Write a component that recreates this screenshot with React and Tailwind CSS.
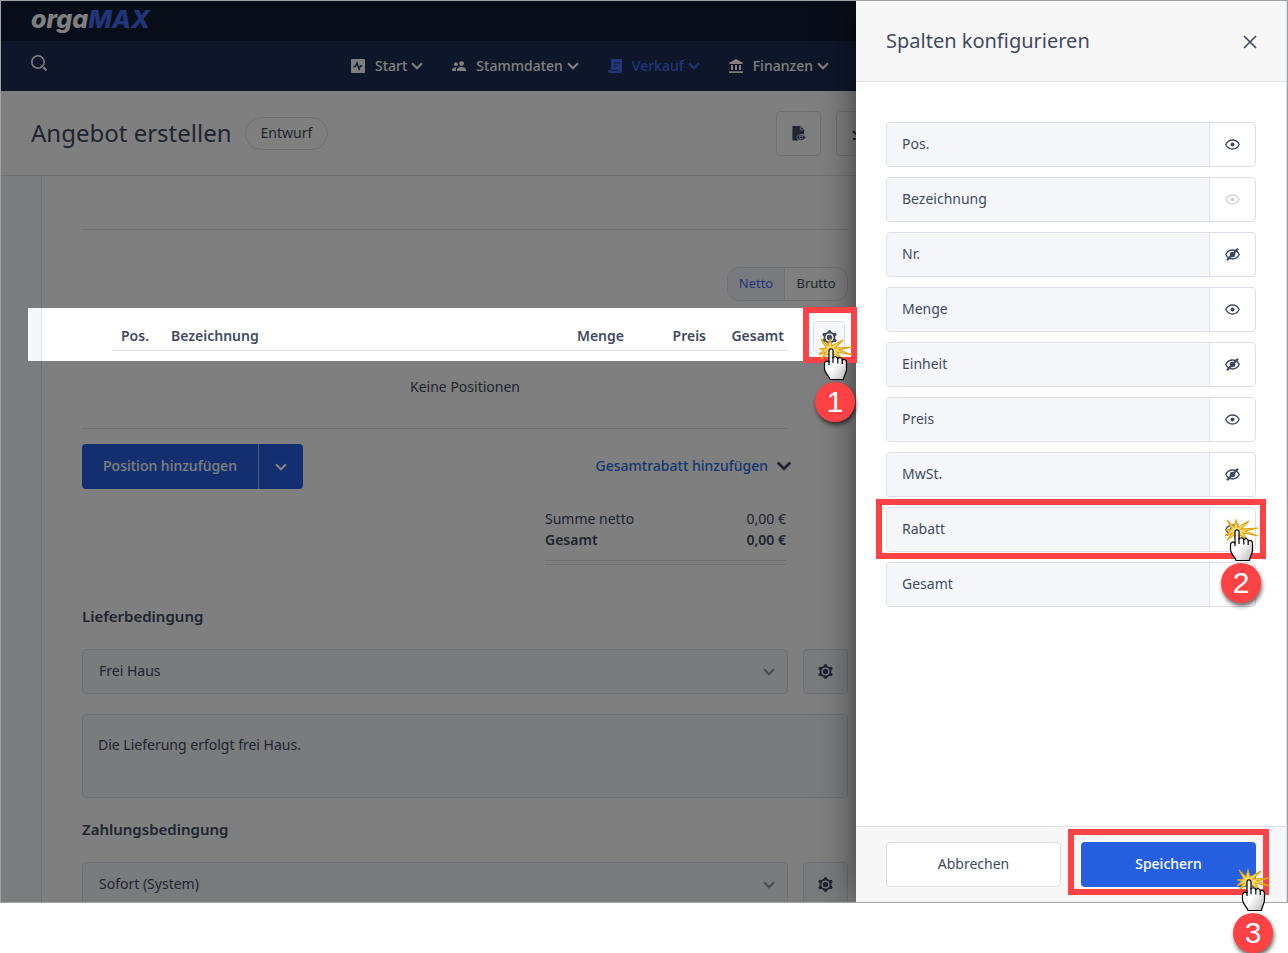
import React, { useState } from 'react';

const initialColumns = [
  { name: 'Pos.', visible: true },
  { name: 'Bezeichnung', visible: true, locked: true },
  { name: 'Nr.', visible: false },
  { name: 'Menge', visible: true },
  { name: 'Einheit', visible: false },
  { name: 'Preis', visible: true },
  { name: 'MwSt.', visible: false },
  { name: 'Rabatt', visible: false, step: 2 },
  { name: 'Gesamt', visible: true },
];

const ChevronIcon = ({ className }) => (
  <svg className={className} viewBox="0 0 12 8" fill="none" stroke="currentColor" strokeWidth="2.2" aria-hidden="true">
    <path d="M1 1.2 6 6.2 11 1.2" />
  </svg>
);

const SearchIcon = () => (
  <svg className="w-4 h-4" viewBox="0 0 16 16" fill="none" stroke="currentColor" strokeWidth="1.5" aria-hidden="true">
    <circle cx="7" cy="7" r="6.2" />
    <path d="M12.3 12.3 15.5 15.5" strokeWidth="2" />
  </svg>
);

const PulseIcon = () => (
  <svg className="w-3.5 h-3.5" viewBox="0 0 14 14" aria-hidden="true">
    <rect width="14" height="14" rx="1" fill="currentColor" />
    <path d="M2.5 7.5h2L6 4l2 6 1.4-3h2" fill="none" stroke="#1c2e54" strokeWidth="1.4" />
  </svg>
);

const PeopleIcon = () => (
  <svg className="w-3.5 h-3.5" viewBox="0 0 14 14" fill="currentColor" aria-hidden="true">
    <circle cx="9.6" cy="4.6" r="2.4" />
    <circle cx="3.9" cy="5.2" r="1.9" />
    <path d="M5 12V10.6c0-1.8 3-2.600 4.600-2.600S14 8.800 14 10.600V12zM0 12v-1.200C0 9.300 2 8.400 4.900 8.300 4.200 9 3.900 9.700 3.900 10.600V12z" />
  </svg>
);

const ReceiptIcon = () => (
  <svg className="w-3.5 h-3.5" viewBox="0 0 14 14" aria-hidden="true">
    <path d="M3 0h11v12c0 1.200-.8 2-2 2H2c-1.200 0-2-.8-2-2v-1h3z" fill="currentColor" />
    <path d="M5.500 4h6M5.500 7h4M3 11.300h6.500v1" fill="none" stroke="#1c2e54" strokeWidth="1" />
  </svg>
);

const BankIcon = () => (
  <svg className="w-3.5 h-3.5" viewBox="0 0 14 14" fill="currentColor" aria-hidden="true">
    <path d="M7 0 13.500 3.500V5H.5V3.500zM2 6h2v5H2zM6 6h2v5H6zM10 6h2v5h-2zM0 12.300h14V14H0z" />
  </svg>
);

const PreviewIcon = () => (
  <svg className="w-[15px] h-[15px]" viewBox="0 0 16 16" aria-hidden="true">
    <path d="M1.500 0h8.500l4 4v5c-3.500-1.200-6.500 0-8 3 .4 1.200 1 2.200 2 3.500H1.500z" fill="currentColor" />
    <path d="M10 1v3h3" fill="none" stroke="#fff" strokeWidth="1" />
    <path d="M5.800 12.300c2-3.900 7.800-3.900 9.900 0-2.100 3.800-7.900 3.800-9.900 0z" fill="currentColor" stroke="#fff" strokeWidth=".5" />
    <circle cx="10.800" cy="12.200" r="1.700" fill="none" stroke="#fff" strokeWidth=".9" />
  </svg>
);

const GearIcon = () => (
  <svg className="w-[15px] h-[15px]" viewBox="0 0 16 16" aria-hidden="true">
    <g fill="currentColor">
      <circle cx="8" cy="8" r="6.300" />
      <circle cx="8" cy="2" r="1.900" />
      <circle cx="8" cy="14" r="1.900" />
      <circle cx="2.400" cy="4.900" r="1.900" />
      <circle cx="13.600" cy="4.900" r="1.900" />
      <circle cx="2.400" cy="11.100" r="1.900" />
      <circle cx="13.600" cy="11.100" r="1.900" />
    </g>
    <circle cx="8" cy="8" r="3.600" fill="none" stroke="#f5f6fb" strokeWidth="1.500" />
  </svg>
);

const EyeIcon = () => (
  <svg className="w-[15px] h-[15px]" viewBox="0 0 15 15" aria-hidden="true">
    <path d="M.8 7.500c3-6 10.400-6 13.400 0-3 6-10.400 6-13.400 0z" fill="none" stroke="currentColor" strokeWidth="1.300" />
    <circle cx="7.500" cy="7.500" r="2" fill="currentColor" />
  </svg>
);

const EyeOffIcon = () => (
  <svg className="w-[15px] h-[15px]" viewBox="0 0 15 15" fill="none" stroke="currentColor" aria-hidden="true">
    <path d="M.8 7.500c3-6 10.400-6 13.400 0-3 6-10.400 6-13.400 0z" strokeWidth="1.400" />
    <circle cx="7.500" cy="7.500" r="2.800" fill="currentColor" stroke="none" />
    <path d="M2 13.300 13 1.700" strokeWidth="2.200" />
  </svg>
);

const CloseIcon = () => (
  <svg className="w-3.5 h-3.5" viewBox="0 0 14 14" fill="none" stroke="currentColor" strokeWidth="1.700" aria-hidden="true">
    <path d="M1 1 13 13M13 1 1 13" />
  </svg>
);

// Click marker: starburst, pointing hand and the numbered step below it
const StepMarker = ({ step, className }) => (
  <div className={`absolute z-40 w-12 pointer-events-none ${className}`}>
    <svg className="w-12 h-12 block" viewBox="-20 -16 48 48" aria-hidden="true">
      <defs>
        <linearGradient id={`hand-${step}`} x1="0" y1="0" x2="1" y2="1">
          <stop offset="0.500" stopColor="#fff" />
          <stop offset="1" stopColor="#b5b5b5" />
        </linearGradient>
      </defs>
      <path
        d="M-10-10-3-3-1-10 1-3 12-9 4-1 21-2 8 1 21 6 6 3 10 9 3 5 0 12-3 5-10 10-5 3-12 6-7 1-12 0-5-1z"
        fill="#fbdc6a"
        stroke="#e0a313"
        strokeWidth="1.100"
      />
      <path
        d="M-2 13V1.500C-2-.8 2-.8 2 1.500V9C3.500 7 6.500 7.500 6.800 9.800 8.500 8 11 8.500 11.200 11 13.500 9.500 15.500 11 15.500 13.500V20C15.500 24 13 26 12.500 30.500H-1C-1.500 27.500-6.500 24-6.500 19.500V15C-6.500 12-4 11.500-2 13z"
        fill={`url(#hand-${step})`}
        stroke="#000"
        strokeWidth="1.200"
        strokeLinejoin="round"
      />
      <path d="M-2 12v4M2 8v6M6.800 9.500V14.500M11.200 11v4" fill="none" stroke="#000" strokeWidth="1.200" />
    </svg>
    <div className="ml-1 mt-px flex w-10 h-10 items-center justify-center rounded-full bg-[#fd4245] text-white text-[30px] leading-none font-['Liberation_Sans',sans-serif] shadow-[1px_3px_4px_rgba(0,0,0,0.6)]">
      {step}
    </div>
  </div>
);

const NavItem = ({ icon, label, active }) => (
  <a href="#" className={`flex items-center font-medium ${active ? 'text-[#426cf5]' : 'text-white'}`}>
    {icon}
    <span className="ml-2.5">{label}</span>
    <ChevronIcon className="ml-1 w-3 h-2" />
  </a>
);

const Condition = ({ id, title, value }) => (
  <>
    <label htmlFor={id} className="block mb-[21px] text-[15px] leading-6 font-semibold">{title}</label>
    <div className="flex gap-[15px]">
      <div className="relative flex-1">
        <select
          id={id}
          defaultValue={value}
          className="w-full h-[45px] px-4 pb-0.5 appearance-none rounded border border-[#dcdfeb] bg-[#f5f6fb]"
        >
          <option>{value}</option>
        </select>
        <ChevronIcon className="absolute right-[13px] top-[19px] w-3 h-2 text-[#999]" />
      </div>
      <button
        aria-label={`${title} verwalten`}
        className="flex w-[45px] h-[45px] items-center justify-center rounded border border-[#dcdfeb] bg-[#f5f6fb]"
      >
        <GearIcon />
      </button>
    </div>
  </>
);

const ColumnRow = ({ column, onToggle }) => (
  <li className="relative flex h-[45px] rounded border border-[#dcdfeb] bg-white">
    <span className="flex flex-1 items-center rounded-l border-r border-[#dcdfeb] bg-[#f5f7fb] pl-[15px] pb-0.5">
      {column.name}
    </span>
    <button
      onClick={onToggle}
      disabled={column.locked}
      aria-label={`${column.name} ein- oder ausblenden`}
      className="flex w-[45px] items-center justify-center disabled:text-[#d0d0d0]"
    >
      {column.visible ? <EyeIcon /> : <EyeOffIcon />}
    </button>
    {column.step && (
      <>
        <div className="absolute z-40 -inset-x-[11px] -top-[9px] -bottom-2 border-6 border-[#fd4245] pointer-events-none" />
        <StepMarker step={column.step} className="-right-2.5 top-[6px]" />
      </>
    )}
  </li>
);

const ColumnDrawer = () => {
  const [columns, setColumns] = useState(initialColumns);

  const toggleColumn = (name) => {
    setColumns(columns.map((c) => (c.name === name ? { ...c, visible: !c.visible } : c)));
  };

  return (
    <aside className="absolute inset-y-0 right-0 z-30 flex w-[431px] flex-col border-r border-[#dcdfeb] bg-white">
      <header className="flex h-[81px] items-center justify-between border-b border-[#dfe1ec] bg-[#f7f7f7] pl-[30px] pr-[29px]">
        <h2 className="text-xl">Spalten konfigurieren</h2>
        <button aria-label="Schließen" className="pt-0.5"><CloseIcon /></button>
      </header>

      <ul className="flex flex-1 flex-col gap-2.5 px-[30px] pt-10">
        {columns.map((column) => (
          <ColumnRow key={column.name} column={column} onToggle={() => toggleColumn(column.name)} />
        ))}
      </ul>

      <footer className="grid grid-cols-2 gap-5 border-t border-[#dfe1ec] bg-[#f7f7f7] px-[30px] py-[15px]">
        <button className="h-[45px] rounded border border-[#dcdfeb] bg-white pb-0.5">Abbrechen</button>
        <div className="relative">
          <button className="h-[45px] w-full rounded bg-[#265fe0] pb-0.5 font-medium text-white">Speichern</button>
          <div className="absolute z-40 -inset-x-[13px] -top-[13px] -bottom-2 border-6 border-[#fd4245] pointer-events-none" />
          <StepMarker step={3} className="right-[-21px] top-[22px]" />
        </div>
      </footer>
    </aside>
  );
};

const PositionTable = () => (
  <div className="relative mt-[7px]">
    {/* Highlighted header strip above the dimmed page */}
    <div className="absolute top-0 -left-[54px] -right-2 z-20 flex h-[53px] bg-white">
      <div className="w-3.5 border-r border-[#dfe1e6] bg-[#f5f7fb]" />
    </div>

    <div className="mr-[60px] border-b border-[#dfe1e6] pl-[30px]">
      <table className="w-full border-separate border-spacing-0">
        <thead className="relative z-20">
          <tr className="text-left leading-5 [&>th]:border-b [&>th]:border-[#dfe1e6] [&>th]:pt-[18px] [&>th]:pb-1 [&>th]:font-semibold">
            <th className="w-[50px] pl-[9px]">Pos.</th>
            <th className="pl-[9px]">Bezeichnung</th>
            <th className="w-[82px] pr-1 text-right">Menge</th>
            <th className="w-[82px] pr-1 text-right">Preis</th>
            <th className="w-[78px] pr-1 text-right">Gesamt</th>
          </tr>
        </thead>
        <tbody>
          <tr>
            <td colSpan={5} className="pt-[26px] pb-[31px] pl-[30px] text-center leading-5">Keine Positionen</td>
          </tr>
        </tbody>
      </table>
    </div>

    <button
      aria-label="Spalten konfigurieren"
      className="absolute right-[3px] top-[13px] z-20 flex w-8 h-8 items-center justify-center rounded border border-[#dcdfeb] bg-[#f5f7fb]"
    >
      <GearIcon />
    </button>
    <div className="absolute z-40 -right-[9px] -top-px w-[54px] h-14 border-6 border-[#fd4245] pointer-events-none" />
    <StepMarker step={1} className="right-[-11px] top-[25px]" />
  </div>
);

const App = () => {
  return (
    <div className="min-h-screen bg-white text-sm text-[#414a61] font-['Noto_Sans',sans-serif]">
      <div className="relative h-[calc(100vh-50px)] border border-[#a0a1a3]">
        <div className="h-full overflow-hidden">
          {/* Logo */}
          <div className="flex h-10 items-center bg-[#101d33] px-[30px]">
            <a href="#" className="pb-1 text-[25px] leading-8 font-extrabold italic text-white font-['Inter',sans-serif]">
              orga<span className="text-[#426cf5]">MAX</span>
            </a>
          </div>

          {/* Navigation */}
          <div className="flex h-[50px] items-center bg-[#1c2e54] px-[30px] text-white">
            <button aria-label="Suche" className="w-[320px] pb-1.5"><SearchIcon /></button>
            <nav className="flex gap-[29px]">
              <NavItem icon={<PulseIcon />} label="Start" />
              <NavItem icon={<PeopleIcon />} label="Stammdaten" />
              <NavItem icon={<ReceiptIcon />} label="Verkauf" active />
              <NavItem icon={<BankIcon />} label="Finanzen" />
            </nav>
          </div>

          {/* Page title */}
          <div className="flex h-[85px] items-center border-b border-[#dfe1e6] pl-[30px] pr-[406px]">
            <h1 className="text-2xl">Angebot erstellen</h1>
            <span className="ml-[13px] rounded-full border border-[#dcdfeb] px-[15px] pt-1 pb-1.5 leading-[21px]">Entwurf</span>
            <div className="ml-auto flex gap-[15px]">
              <button aria-label="Vorschau" className="flex w-[45px] h-[45px] items-center justify-center rounded border border-[#dcdfeb]">
                <PreviewIcon />
              </button>
              <button aria-label="Weitere Aktionen" className="flex w-[45px] h-[45px] items-center justify-center rounded border border-[#dcdfeb]">
                <svg className="w-3.5 h-3.5" viewBox="0 0 14 14" fill="none" stroke="currentColor" strokeWidth="2">
                  <path d="M1 5 5 9 9 5M1 13h12" />
                </svg>
              </button>
            </div>
          </div>

          {/* Document */}
          <div className="flex min-h-full bg-[#f7f8fc] pl-10">
            <main className="flex-1 border-l border-[#dfe1e6] bg-white pl-10 pr-[439px]">
              <div className="h-[54px] border-b border-[#dfe1e6]" />

              <div className="mt-[37px] flex justify-end">
                <div className="flex h-[34px] overflow-hidden rounded-xl border border-[#dcdfeb] text-[13px]">
                  <button className="w-14 bg-[#f3f4fb] pb-0.5 text-[#426cf5]">Netto</button>
                  <button className="w-[63px] border-l border-[#dcdfeb] pb-0.5">Brutto</button>
                </div>
              </div>

              <PositionTable />

              <div className="mr-[56px] mt-[15px] flex items-center justify-between">
                <div className="flex h-[45px] overflow-hidden rounded bg-[#265fe0] text-white">
                  <button className="w-44 pb-0.5 font-medium">Position hinzufügen</button>
                  <button aria-label="Weitere Optionen" className="flex w-[45px] items-center justify-center border-l border-[#a5b8e8]">
                    <ChevronIcon className="w-3 h-2" />
                  </button>
                </div>
                <button className="flex items-center gap-2 pb-0.5 font-medium text-[#2a6de0]">
                  Gesamtrabatt hinzufügen
                  <ChevronIcon className="w-4 h-2.5 text-[#414a61]" />
                </button>
              </div>

              <div className="ml-auto mr-[62px] mt-[19px] w-[241px] leading-[21px]">
                <div className="flex justify-between"><span>Summe netto</span><span>0,00 €</span></div>
                <div className="flex justify-between font-semibold"><span>Gesamt</span><span>0,00 €</span></div>
                <div className="mt-2.5 h-[5px] border-y border-[#dfe1e6]" />
              </div>

              <div className="mt-[39px]">
                <Condition id="lieferbedingung" title="Lieferbedingung" value="Frei Haus" />
                <textarea
                  aria-label="Text der Lieferbedingung"
                  defaultValue="Die Lieferung erfolgt frei Haus."
                  className="mt-5 block h-[84px] w-full resize-none rounded border border-[#dcdfeb] bg-[#f5f6fb] px-[15px] py-5 leading-5"
                />
              </div>

              <div className="mt-[19px]">
                <Condition id="zahlungsbedingung" title="Zahlungsbedingung" value="Sofort (System)" />
              </div>
            </main>
          </div>
        </div>

        {/* Backdrop, with the drawer's shadow kept inside it */}
        <div className="absolute inset-0 z-10 overflow-hidden bg-black/50">
          <div className="ml-auto h-full w-[431px] shadow-[-2px_0_32px_rgba(0,0,0,0.5)]" />
        </div>
        <ColumnDrawer />
      </div>
    </div>
  );
};

export default App;
